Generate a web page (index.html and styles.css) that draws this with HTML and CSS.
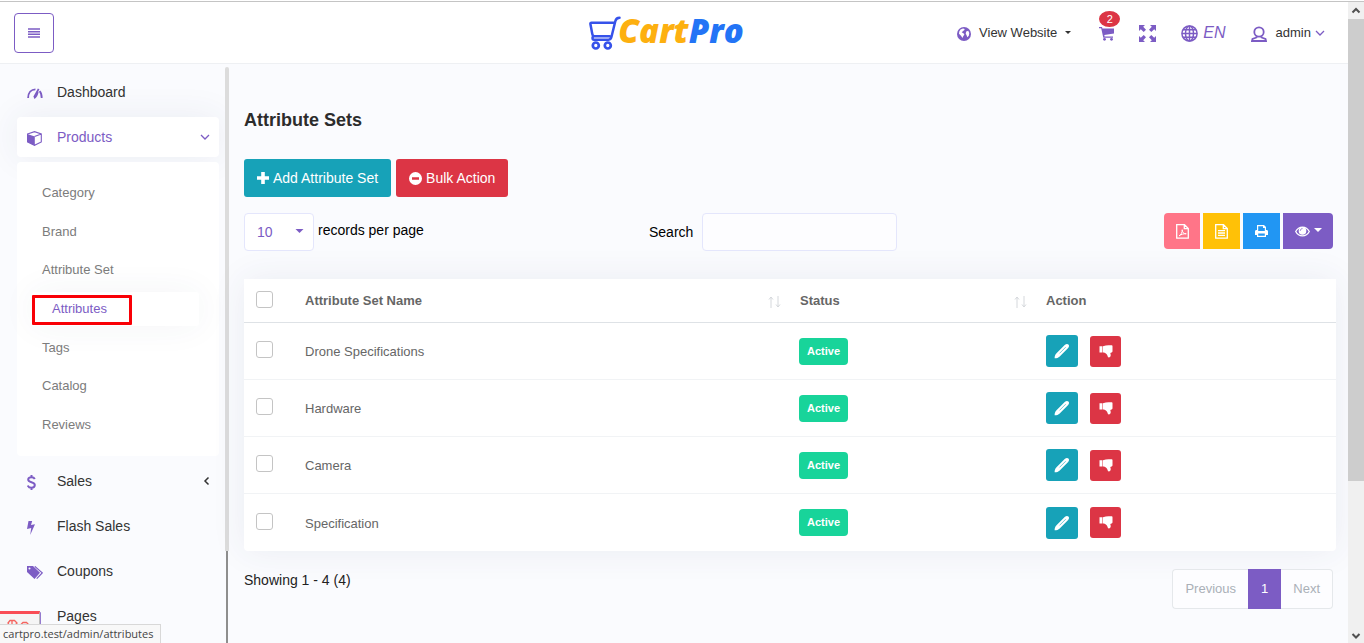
FILE: index.html
```html
<!DOCTYPE html>
<html lang="en">
<head>
<meta charset="utf-8">
<title>CartPro - Attribute Sets</title>
<link rel="stylesheet" href="styles.css">
</head>
<body>
<svg class="defs" aria-hidden="true">
  <symbol id="chevron" viewBox="0 0 10 10"><path d="M1 3l4 4 4-4" fill="none" stroke="currentColor" stroke-width="1.3"/></symbol>
  <symbol id="caret" viewBox="0 0 8 4"><path d="M0 0h8L4 4z"/></symbol>
  <symbol id="pencil" viewBox="0 0 16 16"><path d="M.6 15.3c0-2 .6-3.700 1.900-5L10.700 2.100c1.300-1.300 2.700-1.500 3.700-.6 1 1 .8 2.400-.5 3.700L5.700 13.400c-1.300 1.300-3 1.900-5.100 1.900z"/><path d="M5.500 10.400l6.200-6.200" stroke="#17a2b8" stroke-width=".6"/></symbol>
  <symbol id="thumb" viewBox="0 0 14 13"><path d="M.5 1.200h3v6.200h-3zM4 1.200C6 .6 7.500.3 9.500.3h3.200c.6 0 .8.400.8.900v5c0 .7-.3 1-.9 1.200l-1.300.5c.4 1.300.5 2.200.3 3.200-.3 1.700-2.500 2-2.900.4-.3-1.400-.9-2.300-1.900-3-.9-.7-1.500-.9-2.800-1z"/></symbol>
  <symbol id="sort" viewBox="0 0 13 12"><path d="M3 12V1M1 3.500L3 1l2 2.500M10 0v11M8 8.500l2 2.500 2-2.500" fill="none" stroke="currentColor"/></symbol>
</svg>

<div class="window">
  <div class="app">
    <header class="topbar">
      <button class="menu-toggle" aria-label="Toggle menu"><svg width="12" height="10" viewBox="0 0 12 10"><path d="M0 1h12M0 3.700h12M0 6.300h12M0 9h12" stroke="currentColor" stroke-width="1.500"/></svg></button>
      <a class="logo" href="#">
        <svg width="32" height="34" viewBox="0 0 32 34" fill="none" stroke="#3652ea" stroke-linecap="round" stroke-linejoin="round"><path d="M30.500 1.800c-2.500 0-3.600 1-4.200 3.500l-3.800 15.500c-.5 2-1.500 2.900-3 2.900H5c-2 0-2-3.400 0-3.400h15.500M25.500 6.700H2.500c-.9 0-1.200.4-1.100 1.200l1.900 10c.2 1.400.9 2.400 2.200 2.400" stroke-width="2.500"/><circle cx="6.800" cy="29.500" r="3" stroke-width="2.700"/><circle cx="18.800" cy="29.500" r="3" stroke-width="2.700"/></svg>
        <span class="logo-cart">Cart</span><span class="logo-pro">Pro</span>
      </a>
      <nav class="tools" aria-label="Account">
        <a class="tool website" href="#"><svg width="14" height="14" viewBox="0 0 14 14"><circle cx="7" cy="7" r="7"/><path d="M3.500 2.500l2.500-1 1.700.5-.5 1.200L6 4 4.700 5.500l1.500.6 1.200 1.500-1.200 1.700L5.500 11 4 8.700 2 6.800 2.300 4.500zM9.200 4.500l2-.8L12.300 6l-.5 2.700-1.500 1.600-.8-2.200L8.700 6.700z" fill="#fff"/></svg><span>View Website</span><svg class="small-caret" width="6" height="3"><use href="#caret"/></svg></a>
        <a class="tool cart" href="#" aria-label="Cart"><svg width="15" height="15" viewBox="0 0 15 15"><path d="M0 1h3l.4 1.500H15v5L5.300 9l.3 1.500H14v1.300H4.300L2.200 2.300H0z"/><circle cx="5.500" cy="13.300" r="1.400"/><circle cx="12.500" cy="13.300" r="1.400"/></svg><span class="badge">2</span></a>
        <button class="tool expand" aria-label="Full screen"><svg width="17" height="17" viewBox="0 0 17 17"><path d="M0 0h6L4.200 1.800 7 4.700 4.700 7 1.800 4.200 0 6zM17 0v6l-1.800-1.800L12.300 7 10 4.700l2.800-2.900L11 0zM0 17v-6l1.800 1.800L4.700 10 7 12.300l-2.800 2.900L6 17zM17 17h-6l1.800-1.800-2.800-2.900 2.300-2.300 2.900 2.800L17 11z"/></svg></button>
        <a class="tool lang" href="#"><svg width="17" height="17" viewBox="0 0 17 17" fill="none" stroke="currentColor" stroke-width="1.500"><circle cx="8.500" cy="8.500" r="7.600"/><ellipse cx="8.500" cy="8.500" rx="4" ry="7.600"/><path d="M8.500 1v15M1 8.500h15M2 4.700h13M2 12.300h13"/></svg><em>EN</em></a>
        <a class="tool user" href="#"><svg width="16" height="16" viewBox="0 0 16 16" fill="none" stroke="currentColor" stroke-width="1.800"><circle cx="8" cy="6" r="4.700"/><path d="M5.500 10.500v1L1.500 13l-.5 2h14l-.5-2-4-1.500v-1"/></svg><span>admin</span><svg class="user-chevron" width="10" height="10"><use href="#chevron"/></svg></a>
      </nav>
    </header>

    <div class="body">
      <aside class="sidebar">
        <nav class="menu" aria-label="Main">
          <a class="item" href="#"><svg class="item-icon" width="16" height="11" viewBox="0 0 17 12" fill="none" stroke="currentColor" stroke-width="2"><path d="M1 11C1 5 4.500 1.500 9 1.500M13.500 3.500c1.500 1.500 2.300 4 2.300 7.500M12.500 1L7.500 10"/><path d="M7.500 11c2-1 3.500-4 4-7"/></svg><span>Dashboard</span></a>
          <a class="item open" href="#"><svg class="item-icon" width="15" height="15" viewBox="0 0 15 15"><path d="M.5 3L7.500.700l6.800 2.300v8L7.500 14.300.5 11zM7.500 5.500l6.800-2.500" fill="none" stroke="currentColor" stroke-width="1.100"/><path d="M.3 3l7.500 2.500v9L.3 11z"/></svg><span>Products</span><svg class="arrow" width="10" height="10"><use href="#chevron"/></svg></a>
          <div class="submenu">
            <a href="#">Category</a>
            <a href="#">Brand</a>
            <a href="#">Attribute Set</a>
            <a class="current" href="#">Attributes<span class="highlight"></span></a>
            <a href="#">Tags</a>
            <a href="#">Catalog</a>
            <a href="#">Reviews</a>
          </div>
          <a class="item" href="#"><svg class="item-icon" width="9" height="15" viewBox="0 0 9 15" fill="none" stroke="currentColor" stroke-width="2"><path d="M7.800 4C7.200 2.800 6 2.200 4.500 2.200 2.500 2.200 1.200 3 1.200 4.600c0 3.500 6.600 1.800 6.600 5.400 0 1.800-1.400 2.700-3.300 2.700-1.800 0-3.200-.8-3.700-2.200M4.500 0v2.500M4.500 12.500V15"/></svg><span>Sales</span><svg class="arrow" width="8" height="10" viewBox="0 0 8 10"><path d="M6.500 1.500L3 5l3.500 3.500" fill="none" stroke="#333" stroke-width="1.500"/></svg></a>
          <a class="item" href="#"><svg class="item-icon" width="8" height="14" viewBox="0 0 8 14"><path d="M1.500 0h3.700L4 4l4-.8L3.200 14l1-7L0 8z"/></svg><span>Flash Sales</span></a>
          <a class="item" href="#"><svg class="item-icon" width="16" height="13" viewBox="0 0 16 13"><path fill-rule="evenodd" d="M0 0h6l7 6.700L7.500 13 0 6zM2.500 1.500a1 1 0 100 2 1 1 0 000-2z"/><path d="M7.800.400l7.400 6.500-5.500 5.700" fill="none" stroke="currentColor" stroke-width="1.200"/></svg><span>Coupons</span></a>
          <a class="item" href="#"><svg class="item-icon" width="14" height="14" viewBox="0 0 14 14"><path d="M1 2h12v12H1zM3 0h7v3H3z" fill="none" stroke="currentColor" stroke-width="1.600"/></svg><span>Pages</span></a>
        </nav>
        <div class="side-scroll"><div class="side-thumb"></div><div class="side-rail"></div></div>
      </aside>

      <main class="main">
        <h1>Attribute Sets</h1>
        <div class="actions">
          <button class="btn teal"><svg width="12" height="12" viewBox="0 0 12 12"><path d="M4.200 0h3.600v4.200H12v3.600H7.800V12H4.200V7.800H0V4.200h4.200z"/></svg>Add Attribute Set</button>
          <button class="btn red"><svg width="13" height="13" viewBox="0 0 13 13"><path fill-rule="evenodd" d="M6.500 0a6.500 6.500 0 110 13 6.500 6.500 0 010-13zM3 5.300v2.400h7V5.300z"/></svg>Bulk Action</button>
        </div>
        <div class="filters">
          <label class="length"><span class="select"><select><option>10</option><option>25</option><option>50</option></select><svg width="9" height="4"><use href="#caret"/></svg></span>records per page</label>
          <label class="search">Search<input type="text"></label>
          <div class="exports">
            <button class="pdf" aria-label="PDF"><svg width="13" height="15" viewBox="0 0 13 15" fill="none" stroke="#fff"><path d="M.7.700h7.800l3.800 3.800v9.700H.7z M8.300.700v4h4" stroke-width="1.300"/><path d="M3 12c2-1 3.500-4 3.200-6.500M6.200 6c.2 2.500 1.800 4 4 3.700M3 11.800c2-1.300 4.500-2.300 7.300-2"/></svg></button>
            <button class="csv" aria-label="CSV"><svg width="13" height="15" viewBox="0 0 13 15" fill="none" stroke="#fff" stroke-width="1.300"><path d="M.7.700h7.800l3.800 3.800v9.700H.7zM8.300.700v4h4M3 6.700h7M3 9h7M3 11.300h7"/></svg></button>
            <button class="print" aria-label="Print"><svg width="13" height="12" viewBox="0 0 13 12"><path fill-rule="evenodd" d="M2 0h7l2 2v3h.5C12.500 5 13 5.700 13 6.500V10h-2v2H2v-2H0V6.500C0 5.700.5 5 1.500 5H2zm1.200 1.200V6h6.600V3H8V1.200zm0 7.300v2.300h6.600V8.500z"/></svg></button>
            <button class="view" aria-label="Columns"><svg width="15" height="11" viewBox="0 0 15 11"><path d="M.7 5.500C3.800-.3 11.200-.3 14.300 5.500 11.200 11.300 3.800 11.300.7 5.500z" fill="none" stroke="#fff" stroke-width="1.300"/><circle cx="7.500" cy="4.900" r="3.800"/><path d="M5.300 4.800c0-1.300.9-2.200 2.200-2.200" fill="none" stroke="#7c5cc4" stroke-width=".8"/></svg><svg width="8" height="4"><use href="#caret"/></svg></button>
          </div>
        </div>
        <table class="grid">
          <colgroup><col class="c-check"><col class="c-name"><col class="c-status"><col></colgroup>
          <thead><tr><th><input type="checkbox" aria-label="Select all"></th><th><span class="sortable">Attribute Set Name<svg width="13" height="12"><use href="#sort"/></svg></span></th><th><span class="sortable">Status<svg width="13" height="12"><use href="#sort"/></svg></span></th><th>Action</th></tr></thead>
          <tbody>
            <tr><td><input type="checkbox" aria-label="Select Drone Specifications"></td><td class="name">Drone Specifications</td><td><span class="status">Active</span></td><td><div class="ops"><button class="edit" aria-label="Edit"><svg width="16" height="16"><use href="#pencil"/></svg></button><button class="off" aria-label="Disable"><svg width="14" height="13"><use href="#thumb"/></svg></button></div></td></tr>
            <tr><td><input type="checkbox" aria-label="Select Hardware"></td><td class="name">Hardware</td><td><span class="status">Active</span></td><td><div class="ops"><button class="edit" aria-label="Edit"><svg width="16" height="16"><use href="#pencil"/></svg></button><button class="off" aria-label="Disable"><svg width="14" height="13"><use href="#thumb"/></svg></button></div></td></tr>
            <tr><td><input type="checkbox" aria-label="Select Camera"></td><td class="name">Camera</td><td><span class="status">Active</span></td><td><div class="ops"><button class="edit" aria-label="Edit"><svg width="16" height="16"><use href="#pencil"/></svg></button><button class="off" aria-label="Disable"><svg width="14" height="13"><use href="#thumb"/></svg></button></div></td></tr>
            <tr><td><input type="checkbox" aria-label="Select Specification"></td><td class="name">Specification</td><td><span class="status">Active</span></td><td><div class="ops"><button class="edit" aria-label="Edit"><svg width="16" height="16"><use href="#pencil"/></svg></button><button class="off" aria-label="Disable"><svg width="14" height="13"><use href="#thumb"/></svg></button></div></td></tr>
          </tbody>
        </table>
        <div class="foot">
          <span>Showing 1 - 4 (4)</span>
          <nav class="pager" aria-label="Pages"><a href="#">Previous</a><a class="active" href="#">1</a><a href="#">Next</a></nav>
        </div>
      </main>
    </div>
  </div>
  <div class="scrollbar">
    <svg width="16" height="17" viewBox="0 0 16 17"><path d="M4.500 10.500L8 7l3.500 3.500" fill="none" stroke="#505050" stroke-width="2"/></svg>
    <div class="thumb"></div>
    <svg class="down" width="16" height="17" viewBox="0 0 16 17"><path d="M4.500 8L8 11.500 11.500 8" fill="none" stroke="#505050" stroke-width="2"/></svg>
  </div>
</div>
<div class="debug"><svg width="34" height="14" viewBox="0 0 34 14" fill="none" stroke="#f4645f" stroke-width="1.300"><path d="M8 6l2-2.500h4.500L17 6l-2.500 3H10zM21 7.500l2-2h3.500l2 2-2 2.500H23zM12 4V9"/></svg></div>
<div class="link-status">cartpro.test/admin/attributes</div>
</body>
</html>
```
FILE: styles.css
```css
* { box-sizing: border-box; }
body {
  margin: 0;
  background: #fafbfe;
  color: #333;
  font: 14px/20px "Liberation Sans", Arial, sans-serif;
}
a { color: inherit; text-decoration: none; }
button { font: inherit; border: 0; padding: 0; color: inherit; background: none; }
svg { flex: none; display: block; }
svg:not([fill]) { fill: currentColor; }
.defs { position: absolute; width: 0; height: 0; }

.window { display: flex; height: 100vh; overflow: hidden; border-top: 1px solid #fff; }
.app { flex: 1; min-width: 0; display: flex; flex-direction: column; border-top: 1px solid #c4c4c4; }

.topbar {
  display: grid;
  grid-template-columns: 1fr auto 1fr;
  align-items: center;
  height: 62px;
  flex: none;
  padding: 0 23px 0 14px;
  background: #fff;
  border-bottom: 1px solid #eef0f3;
}
.menu-toggle {
  display: grid;
  place-items: center;
  width: 40px;
  height: 40px;
  color: #7c5cc4;
  border: 1px solid #7c5cc4;
  border-radius: 4px;
}
.logo { display: flex; align-items: center; font: italic 800 33px/34px "Open Sans", sans-serif; margin-right: 6px; }
.logo > svg { margin-right: -3px; }
.logo > span { padding-bottom: 4px; }
.logo-cart { color: #fdb010; }
.logo-pro { color: #2374f6; }
.tools { display: flex; align-items: center; justify-content: flex-end; gap: 25px; font-size: 13px; }
.tool { display: flex; align-items: center; position: relative; }
.tool > svg { color: #7c5cc4; }
.website { gap: 8px; margin-right: 3px; }
.website .small-caret { color: #333; }
.lang { gap: 5px; color: #7c5cc4; font-size: 16px; }
.expand { color: #7c5cc4; }
.user { gap: 9px; }
.user .user-chevron { margin-left: -5px; }
.tool > svg:first-child { margin-top: 2px; }
.badge {
  position: absolute;
  left: 0;
  top: -13px;
  width: 21px;
  height: 16px;
  border-radius: 50%;
  background: #dc3545;
  color: #fff;
  font-size: 11px;
  line-height: 16px;
  text-align: center;
}

.body { flex: 1; min-height: 0; display: flex; }
.sidebar { flex: none; width: 229px; display: flex; overflow: hidden; }
.menu { flex: 1; display: flex; flex-direction: column; gap: 5px; padding: 8px 6px 0 17px; }
.item {
  flex: none;
  display: grid;
  grid-template-columns: 30px 1fr auto;
  align-items: center;
  height: 40px;
  padding: 0 9px 0 10px;
  border-radius: 4px;
}
.item-icon { color: #7c5cc4; margin-top: 3px; }
.open { background: #fff; color: #7c5cc4; box-shadow: 0 0 35px rgba(50, 60, 100, .08); }
.submenu {
  flex: none;
  display: grid;
  grid-template-rows: repeat(7, 1fr);
  align-items: center;
  height: 294px;
  padding: 12px 20px 12px 15px;
  border-radius: 4px;
  background: #fff;
  color: #7c7c7c;
  font-size: 13px;
}
.submenu a { padding: 0 10px; line-height: 34px; }
.submenu .current {
  position: relative;
  padding-left: 20px;
  color: #7c5cc4;
  background: #fff;
  border-radius: 3px;
  box-shadow: 0 0 35px rgba(50, 60, 100, .06);
}
.submenu a:not(.current) { position: relative; }
.highlight { position: absolute; left: 0; top: 3px; width: 100px; height: 30px; border: 3px solid #f90006; border-radius: 1px; }
.side-scroll { width: 4px; display: flex; flex-direction: column; align-items: center; padding-top: 3px; }
.side-thumb { flex: 21; width: 4px; background: #dcdcdc; border-radius: 2px 2px 0 0; }
.side-rail { flex: 4; width: 2px; background: #8e8e8e; }

.main { flex: 1; min-width: 0; padding: 44px 12px 0 15px; color: #000; }
h1 { margin: 0 0 27px; font-size: 18px; line-height: 24px; color: #2c2c2c; }
.actions { display: flex; gap: 5px; }
.btn { display: flex; align-items: center; gap: 4px; height: 38px; padding: 0 13px; border-radius: 3px; color: #fff; }
.teal, .edit { background: #17a2b8; }
.red, .off { background: #dc3545; }
.filters { display: grid; grid-template-columns: 405px 1fr auto; align-items: start; margin: 16px 3px 28px 0; }
.length { display: flex; gap: 4px; line-height: 34px; }
.search { display: flex; gap: 9px; line-height: 38px; }
.select { position: relative; display: block; }
.select svg { position: absolute; right: 10px; top: 16px; color: #7c5cc4; }
select {
  appearance: none;
  width: 70px;
  height: 38px;
  padding: 0 12px;
  border: 1px solid #e4e6fc;
  border-radius: 4px;
  background: #fff;
  color: #7c5cc4;
  font: inherit;
}
.search input { width: 195px; height: 38px; border: 1px solid #e4e6fc; border-radius: 4px; background: #fdfdff; padding: 0 12px; }
.exports { display: flex; gap: 3px; color: #fff; }
.exports button { display: flex; align-items: center; justify-content: center; gap: 4px; width: 37px; height: 36px; }
.exports .pdf { width: 36px; background: #ff7588; border-radius: 4px 0 0 4px; }
.csv { background: #ffc107; }
.print { background: #2196f3; }
.exports .view { width: 50px; background: #7c5cc4; border-radius: 0 4px 4px 0; }
.view svg + svg { margin-bottom: 3px; }

.grid {
  width: 100%;
  table-layout: fixed;
  border-spacing: 0;
  background: #fff;
  color: #666;
  font-size: 13px;
  border-radius: 0 0 4px 4px;
  box-shadow: 0 0 35px rgba(50, 60, 100, .08);
}
.c-check { width: 49px; }
.c-name { width: 495px; }
.c-status { width: 246px; }
th, td { padding: 0 12px; text-align: left; vertical-align: middle; }
th { height: 44px; border-bottom: 1px solid #dee2e6; }
td { height: 57px; border-bottom: 1px solid #f1f3f5; }
td.name { padding-top: 2px; }
tr:last-child td { border-bottom: 0; }
.sortable { display: flex; justify-content: space-between; align-items: center; margin-right: -5px; }
.sortable svg { color: #d5d8dc; margin-top: 2px; }
input[type="checkbox"] { appearance: none; display: block; width: 17px; height: 17px; margin: 0 0 3px; border: 1px solid #c4c4c4; border-radius: 3px; background: #fff; }
.status { display: inline-block; padding: 0 8px; margin-left: -1px; border-radius: 4px; background: #18d49a; color: #fff; font-size: 11px; font-weight: bold; line-height: 27px; }
.ops { display: flex; align-items: center; gap: 12px; color: #fff; }
.ops button { display: grid; place-items: center; width: 32px; height: 32px; border-radius: 3px; }
.ops .off { width: 31px; height: 31px; }

.foot { display: flex; justify-content: space-between; align-items: flex-start; padding: 18px 3px 0 0; color: #222; }
.foot > span { line-height: 22px; }
.pager { display: flex; font-size: 13px; line-height: 38px; color: #aab0b7; }
.pager a { padding: 0 12px; border: 1px solid #e5e8eb; background: #fdfdff; }
.pager a:first-child { border-right: 0; border-radius: 4px 0 0 4px; }
.pager a:last-child { border-left: 0; border-radius: 0 4px 4px 0; }
.pager .active { background: #7c5cc4; border-color: #7c5cc4; color: #fff; }

.scrollbar { width: 16px; flex: none; display: flex; flex-direction: column; background: #f0f0f0; border-top: 1px solid #c4c4c4; }
.thumb { height: 72%; background: #cdcdcd; }
.down { margin-top: auto; }
.debug { position: fixed; left: 0; bottom: 0; width: 40px; height: 32px; border-top: 3px solid #f94d55; border-right: 1px solid #bbb; background: #f5f5f5; padding-top: 3px; }
.link-status { position: fixed; left: 0; bottom: 0; padding: 0 7px 0 3px; border: 1px solid #d8d8d8; border-width: 1px 1px 0 0; background: #f8f8f8; color: #444; font: 11px/18px "Open Sans", sans-serif; }
```
